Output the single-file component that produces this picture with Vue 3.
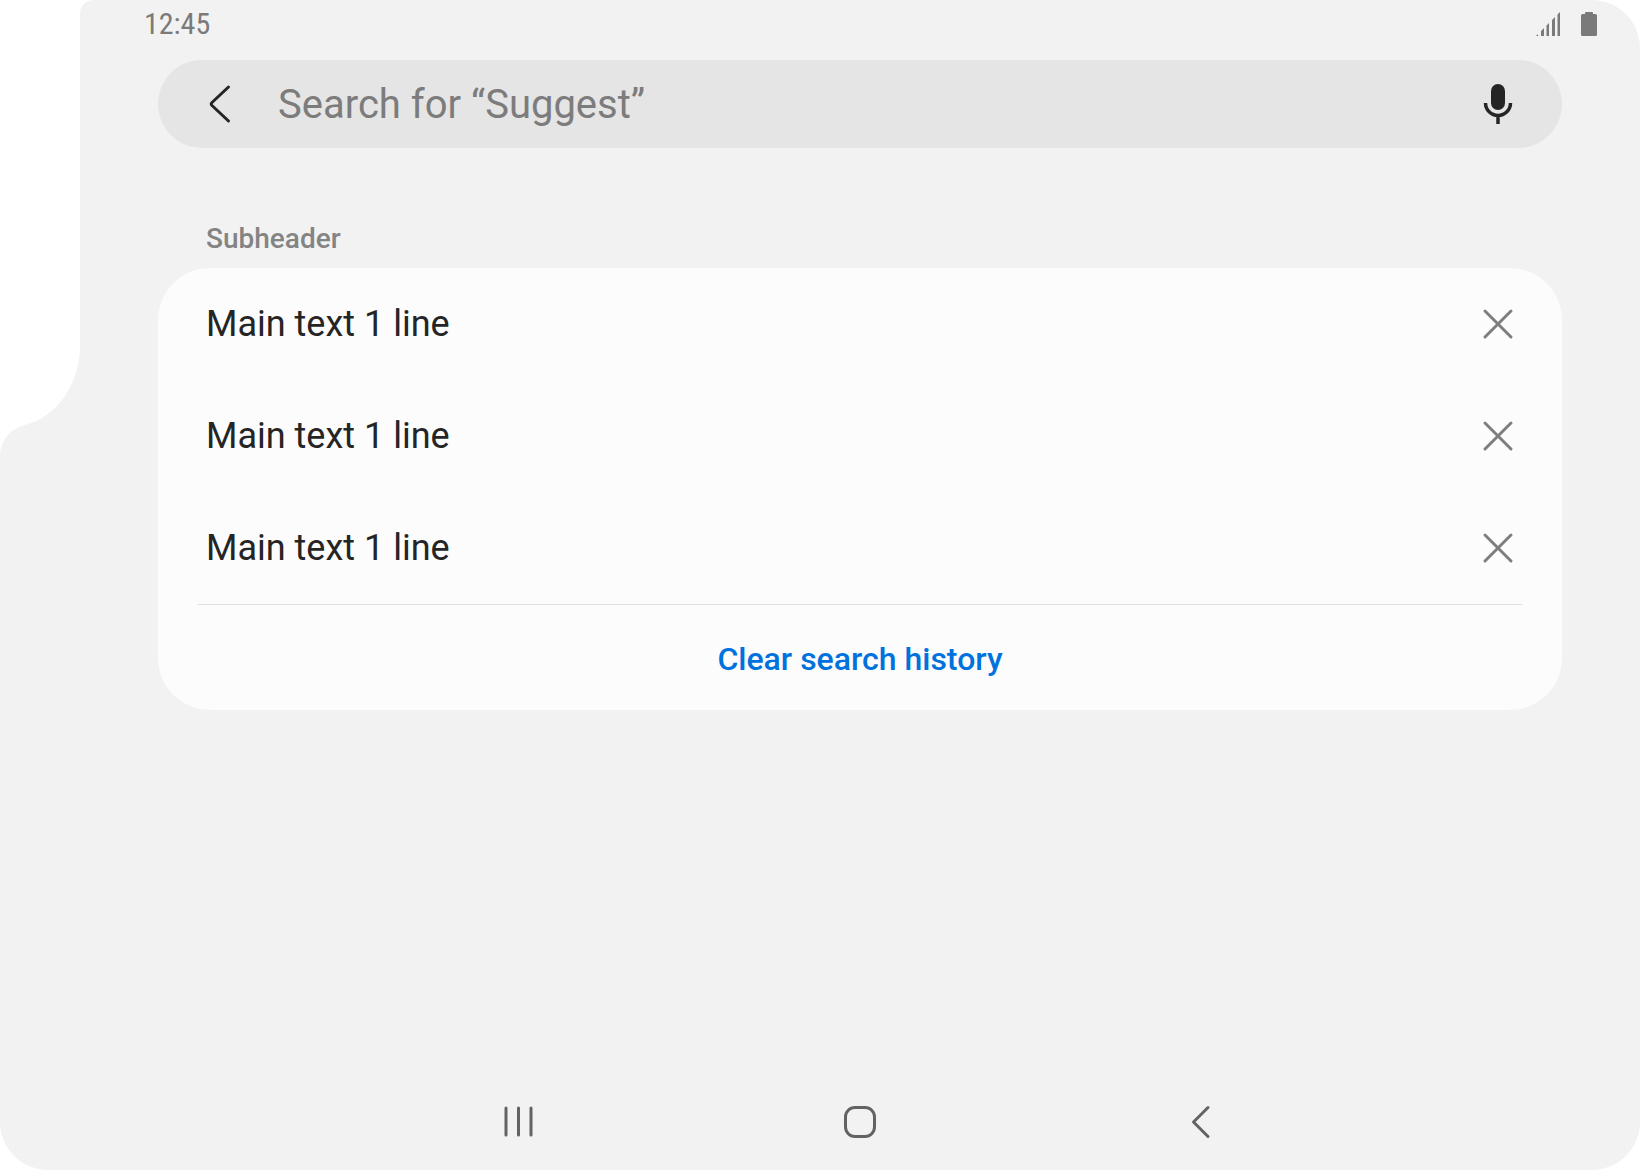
<script setup>
import { ref } from 'vue'

const query = ref('')
const history = ref([
  { id: 1, text: 'Main text 1 line' },
  { id: 2, text: 'Main text 1 line' },
  { id: 3, text: 'Main text 1 line' },
])

function remove(id) {
  history.value = history.value.filter((item) => item.id !== id)
}

function clearHistory() {
  history.value = []
}
</script>

<template>
  <div class="device">
    <svg class="notch" width="100" height="460" viewBox="0 0 100 460" aria-hidden="true">
      <path
        fill="#fff"
        d="M0 0H94C86 0 80 6 80 14V345C80 384 57 416 28 424C12 428 0 438 0 458Z"
      />
    </svg>

    <div class="screen">
      <header class="status">
        <time class="clock">12:45</time>
        <div class="indicators">
          <svg width="24" height="24" viewBox="0 0 24 24" aria-label="Signal">
            <path
              fill="#7a7a7a"
              d="M0 24L2 22V24ZM5 19L8 16V24H5ZM10.500 13.500L13 11V24H10.500ZM16 8L19 5V24H16ZM21.500 2.500L24 0V24H21.500Z"
            />
          </svg>
          <svg width="16" height="24" viewBox="0 0 16 24" aria-label="Battery">
            <path
              fill="#7a7a7a"
              d="M5 0H11Q12 0 12 1V2H14.500Q16 2 16 3.500V22.500Q16 24 14.500 24H1.500Q0 24 0 22.500V3.500Q0 2 1.500 2H4V1Q4 0 5 0Z"
            />
          </svg>
        </div>
      </header>

      <main class="content">
        <form class="search" role="search" @submit.prevent>
          <button class="icon-button" type="button" aria-label="Navigate up">
            <svg width="48" height="48" viewBox="0 0 48 48">
              <path
                d="M30.500 7L14 22.500Q12.500 24 14 25.500L30.500 41"
                fill="none"
                stroke="#252525"
                stroke-width="3"
                stroke-linecap="round"
              />
            </svg>
          </button>
          <input
            v-model="query"
            class="field"
            type="text"
            aria-label="Search"
            placeholder="Search for “Suggest”"
          />
          <button class="icon-button" type="button" aria-label="Voice search">
            <svg width="48" height="48" viewBox="0 0 48 48">
              <rect x="17" y="4" width="14" height="26" rx="7" fill="#252525" />
              <path
                d="M11.500 23A12.500 12.500 0 0 0 36.500 23M24 35.500V44"
                fill="none"
                stroke="#252525"
                stroke-width="3.500"
              />
            </svg>
          </button>
        </form>

        <h2 class="subheader">Subheader</h2>
        <section class="card">
          <ul class="list">
            <li v-for="item in history" :key="item.id" class="row">
              <span>{{ item.text }}</span>
              <button
                class="icon-button"
                type="button"
                aria-label="Remove from history"
                @click="remove(item.id)"
              >
                <svg width="48" height="48" viewBox="0 0 48 48">
                  <path
                    d="M11 11L37 37M37 11L11 37"
                    fill="none"
                    stroke="#7e7e7e"
                    stroke-width="3"
                    stroke-linecap="round"
                  />
                </svg>
              </button>
            </li>
          </ul>
          <button class="clear" type="button" @click="clearHistory">Clear search history</button>
        </section>
      </main>

      <nav class="navbar" aria-label="System">
        <button class="icon-button" type="button" aria-label="Recents">
          <svg width="48" height="48" viewBox="0 0 48 48">
            <path
              d="M11 10V37M23.500 10V37M36 10V37"
              fill="none"
              stroke="#636363"
              stroke-width="3"
              stroke-linecap="round"
            />
          </svg>
        </button>
        <button class="icon-button" type="button" aria-label="Home">
          <svg width="48" height="48" viewBox="0 0 48 48">
            <rect
              x="9.500"
              y="9.500"
              width="29"
              height="29"
              rx="9.500"
              fill="none"
              stroke="#636363"
              stroke-width="3"
            />
          </svg>
        </button>
        <button class="icon-button" type="button" aria-label="Back">
          <svg width="48" height="48" viewBox="0 0 48 48">
            <path
              d="M31 9.500L16.500 24L31 38.500"
              fill="none"
              stroke="#636363"
              stroke-width="3"
              stroke-linecap="round"
              stroke-linejoin="round"
            />
          </svg>
        </button>
      </nav>
    </div>
  </div>
</template>

<style>
body {
  margin: 0;
  background: #fff;
}
</style>

<style scoped>
* {
  box-sizing: border-box;
}

.device {
  position: relative;
  display: flex;
  min-height: 100vh;
  padding-left: 80px;
  overflow: hidden;
  border-radius: 0 48px 48px 48px;
  background: #f2f2f2;
  color: #252525;
  font-family: Roboto, sans-serif;
}

.notch {
  position: absolute;
  top: 0;
  left: 0;
}

.screen {
  display: flex;
  flex: 1;
  flex-direction: column;
}

.status {
  display: flex;
  align-items: center;
  justify-content: space-between;
  height: 48px;
  padding: 0 43px 0 64px;
}

.clock {
  color: #7a7a7a;
  font-family: "Roboto Condensed", Roboto, sans-serif;
  font-size: 30px;
  line-height: 48px;
}

.indicators {
  display: flex;
  gap: 21px;
}

.content {
  flex: 1;
  padding: 12px 78px 0;
}

.search {
  display: flex;
  align-items: center;
  height: 88px;
  padding: 0 40px;
  border-radius: 44px;
  background: #e5e5e5;
}

.field {
  flex: 1;
  min-width: 0;
  height: 88px;
  margin-left: 32px;
  padding: 0;
  border: 0;
  outline: 0;
  background: none;
  color: #252525;
  font: 400 40px/48px Roboto, sans-serif;
}

.field::placeholder {
  color: #7c7c7c;
  opacity: 1;
}

.icon-button {
  display: flex;
  align-items: center;
  justify-content: center;
  width: 48px;
  height: 48px;
  padding: 0;
  border: 0;
  background: none;
  cursor: pointer;
}

.subheader {
  margin: 72px 48px 10px;
  color: #848484;
  font-size: 28px;
  font-weight: 500;
  line-height: 38px;
}

.card {
  padding: 0 40px;
  border-radius: 52px;
  background: #fcfcfc;
}

.list {
  margin: 0;
  padding: 0;
  border-bottom: 1px solid #dfdfdf;
  list-style: none;
}

.row {
  display: flex;
  align-items: center;
  justify-content: space-between;
  height: 112px;
  padding-left: 8px;
  font-size: 36px;
  line-height: 48px;
}

.clear {
  display: block;
  width: 100%;
  height: 105px;
  padding: 2px 0 0;
  border: 0;
  background: none;
  color: #0072de;
  font: 500 32px/40px Roboto, sans-serif;
  cursor: pointer;
}

.navbar {
  display: grid;
  grid-template-columns: repeat(3, 1fr);
  place-items: center;
  width: 100%;
  max-width: 1024px;
  height: 96px;
  margin: 0 auto;
}
</style>
